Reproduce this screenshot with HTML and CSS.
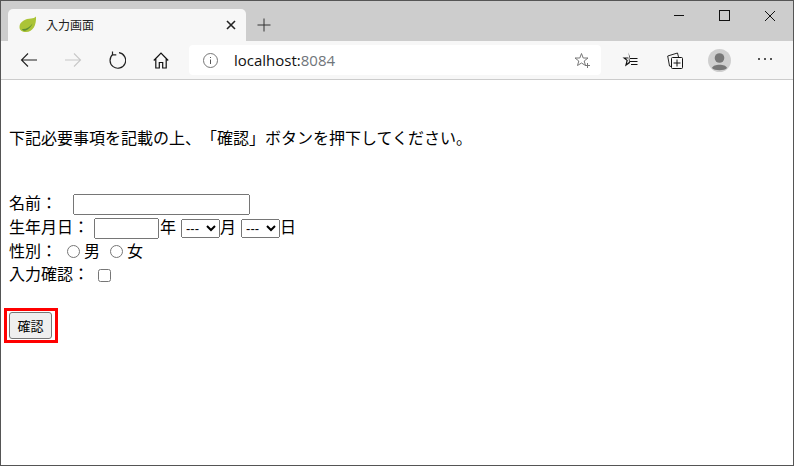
FILE: index.html
```html
<!DOCTYPE html>
<html lang="ja">
<head>
<meta charset="utf-8">
<title>入力画面</title>
<link rel="stylesheet" href="styles.css">
</head>
<body>
<div class="window">
  <div class="tabstrip">
    <div class="tab">
      <svg class="favicon" width="18" height="17" viewBox="0 0 18 17"><path d="M0.500 11C0.500 5.500 7 2.500 12 2.500C14 2.500 16 1.500 17 0.500C17.500 9 14 16 7 16C3 16 0.500 14.500 0.500 11Z" fill="#abc437"/><path d="M3 13C7 13.500 11 11 13.500 7.500C12 11.500 8 15 4.500 14.800C3.800 14.500 3.200 13.800 3 13Z" fill="#5d8f33"/></svg>
      <span class="tab-title">入力画面</span>
      <svg class="tab-close" width="10" height="10" viewBox="0 0 10 10"><path d="M1 1L9 9M9 1L1 9" stroke="#222" stroke-width="1.600" fill="none"/></svg>
    </div>
    <svg class="newtab" width="14" height="14" viewBox="0 0 14 14"><path d="M7 0.500V13.500M0.500 7H13.500" stroke="#333" stroke-width="1" fill="none"/></svg>
    <div class="caption">
      <svg width="12" height="12" viewBox="0 0 12 12"><path d="M0 5.500H10" stroke="#111" fill="none"/></svg>
      <svg width="12" height="12" viewBox="0 0 12 12"><rect x="0.500" y="0.500" width="10" height="10" stroke="#111" fill="none"/></svg>
      <svg width="12" height="12" viewBox="0 0 12 12"><path d="M1 1L11 11M11 1L1 11" stroke="#111" fill="none"/></svg>
    </div>
  </div>
  <div class="toolbar">
    <div class="navs">
      <span class="cell"><svg width="18" height="16" viewBox="0 0 18 16"><path d="M17 8H1.500M8 1.500L1.500 8L8 14.500" stroke="#222" fill="none" stroke-width="1.100"/></svg></span>
      <span class="cell"><svg width="18" height="16" viewBox="0 0 18 16"><path d="M1 8H16.500M10 1.500L16.500 8L10 14.500" stroke="#c8c8c8" fill="none" stroke-width="1.100"/></svg></span>
      <span class="cell"><svg width="18" height="18" viewBox="0 0 18 18"><path d="M5 3.300A7.800 7.800 0 1 0 11 1.700M4.500 0.500V3.800H8.300" stroke="#222" fill="none" stroke-width="1.200"/></svg></span>
      <span class="cell"><svg width="16" height="17" viewBox="0 0 16 17"><path d="M0.800 8.500L8 1L15.200 8.500M2.800 7V16H6.300V10.500H9.700V16H13.200V7" stroke="#111" fill="none" stroke-width="1.200"/></svg></span>
    </div>
    <div class="address">
      <svg class="info" width="15" height="15" viewBox="0 0 15 15"><circle cx="7.500" cy="7.500" r="7" stroke="#777" fill="none"/><path d="M7.500 6.500V11M7.500 4V5" stroke="#555" fill="none"/></svg>
      <span class="url"><span class="host">localhost:</span>8084</span>
      <svg class="star" width="16" height="16" viewBox="0 0 16 16"><path d="M7.500 1.500L9.200 6H14L10.200 9L11.500 13.500L7.500 11L3.500 13.500L4.800 9L1 6H5.800Z" stroke="#777" fill="none"/><path d="M11 13.500H16M13.500 11V16" stroke="#777" fill="none"/></svg>
    </div>
    <div class="tools">
      <span class="tool"><svg width="16" height="16" viewBox="0 0 16 16"><path d="M6.500 0.500L8 5.500H0.500L4.500 8.500L3 14.500L8 11Z" fill="#111"/><path d="M6.500 4L5.800 6.500H3.800L5.800 8.200L5 11.500L7 10Z" fill="#f7f7f7"/><path d="M8 6.500H15.500M8 9.500H15.500M9 12.500H15.500" stroke="#111" fill="none"/></svg></span>
      <span class="tool"><svg width="16" height="17" viewBox="0 0 16 17"><path d="M4 14.500L2.500 14L0.700 4L10.500 1L11.500 5" stroke="#222" fill="none"/><rect x="4.500" y="5.500" width="11" height="11" rx="1" stroke="#111" fill="#f7f7f7"/><path d="M10 7.500V14.500M6.500 11H13.500" stroke="#111" fill="none"/></svg></span>
      <span class="tool"><svg width="23" height="23" viewBox="0 0 23 23"><circle cx="11.500" cy="11.500" r="11.500" fill="#cfcfcf"/><circle cx="11.500" cy="9" r="4.800" fill="#777"/><path d="M4 19C5 14.500 18 14.500 19 19C17 22 6 22 4 19Z" fill="#777"/></svg></span>
      <span class="tool"><svg width="16" height="4" viewBox="0 0 16 4"><path d="M1 1H3M7 1H9M13 1H15" stroke="#222" stroke-width="1.500" fill="none"/></svg></span>
    </div>
  </div>
  <main class="page">
    <p class="intro">下記必要事項を記載の上、「確認」ボタンを押下してください。</p>
    <form class="form">
      <div class="row">名前：<input class="name" type="text"></div>
      <div class="row">生年月日：<input class="year" type="text">年<select class="sel"><option>---</option></select>月<select class="sel"><option>---</option></select>日</div>
      <div class="row row-short">性別：<input class="radio" type="radio" name="g">男<input class="radio" type="radio" name="g">女</div>
      <div class="row">入力確認：<input class="check" type="checkbox"></div>
      <div class="marker"><button class="submit" type="button">確認</button></div>
    </form>
  </main>
</div>
</body>
</html>
```
FILE: styles.css
```css
html, body { margin: 0; padding: 0; }
body { width: 794px; height: 466px; overflow: hidden; font-family: "Liberation Sans", "Noto Sans CJK JP", sans-serif; background: #fff; text-spacing-trim: space-all; }
.window { box-sizing: border-box; width: 794px; height: 466px; border: 1px solid #555; display: flex; flex-direction: column; background: #fff; }
.tabstrip { height: 40px; background: #cdcdcd; display: flex; align-items: flex-end; padding-left: 7px; flex: none; }
.tab { width: 238px; height: 32px; box-sizing: border-box; background: #f7f7f7; border-radius: 5px 5px 0 0; display: flex; align-items: center; padding: 0 10px 1px 11px; }
.favicon { margin-right: 9px; }
.tab-title { font-size: 12px; color: #222; flex: 1; }
.newtab { margin: 0 0 9px 11px; }
.caption { margin-left: auto; align-self: flex-start; display: flex; gap: 33px; padding: 9px 17px 0 0; }
.toolbar { height: 39px; box-sizing: border-box; background: #f7f7f7; border-bottom: 1px solid #ccc; display: flex; align-items: center; flex: none; }
.navs { display: flex; align-items: center; padding-left: 6px; width: 188px; box-sizing: border-box; }
.cell { width: 44px; display: flex; justify-content: center; align-items: center; }
.address { width: 412px; height: 30px; box-sizing: border-box; background: #fff; border-radius: 4px; display: flex; align-items: center; padding: 0 11px 0 14px; }
.url { font-size: 15px; font-family: "Open Sans", sans-serif; color: #70757a; margin-left: 16px; flex: 1; }
.host { color: #111; }
.tools { display: flex; align-items: center; padding-left: 6px; }
.tool { width: 45px; display: flex; justify-content: center; align-items: center; }
.page { flex: 1; color: #000; font-size: 16px; padding: 0 8px; line-height: 24px; }
.intro { margin: 47px 0 0; height: 24px; }
.form { margin: 41px 0 0; }
.row { height: 24px; display: flex; align-items: center; }
.row-short { height: 23px; }
.name { box-sizing: border-box; width: 177px; height: 21px; margin: 0 0 0 16px; padding: 1px 2px; }
.year { box-sizing: border-box; width: 65px; height: 21px; margin: 0 1px 0 5px; padding: 1px 2px; }
.sel { box-sizing: border-box; width: 39px; height: 19px; font-size: 13px; margin: 0 0 0 5px; font-family: "Liberation Sans", sans-serif; }
.radio { width: 13px; height: 13px; margin: 0 4px 0 10px; }
.check { width: 13px; height: 13px; margin: 0 0 0 9px; }
.marker { width: max-content; margin: 21px 0 0 -5px; padding: 1px 3px 1px 2px; border: 3px solid #f00; }
.submit { display: block; box-sizing: border-box; width: 43px; height: 27px; padding: 0; font-size: 13px; font-family: "Liberation Sans", "Noto Sans CJK JP", sans-serif; border: 1px solid #767676; border-radius: 3px; background: #efefef; color: #000; }
```
